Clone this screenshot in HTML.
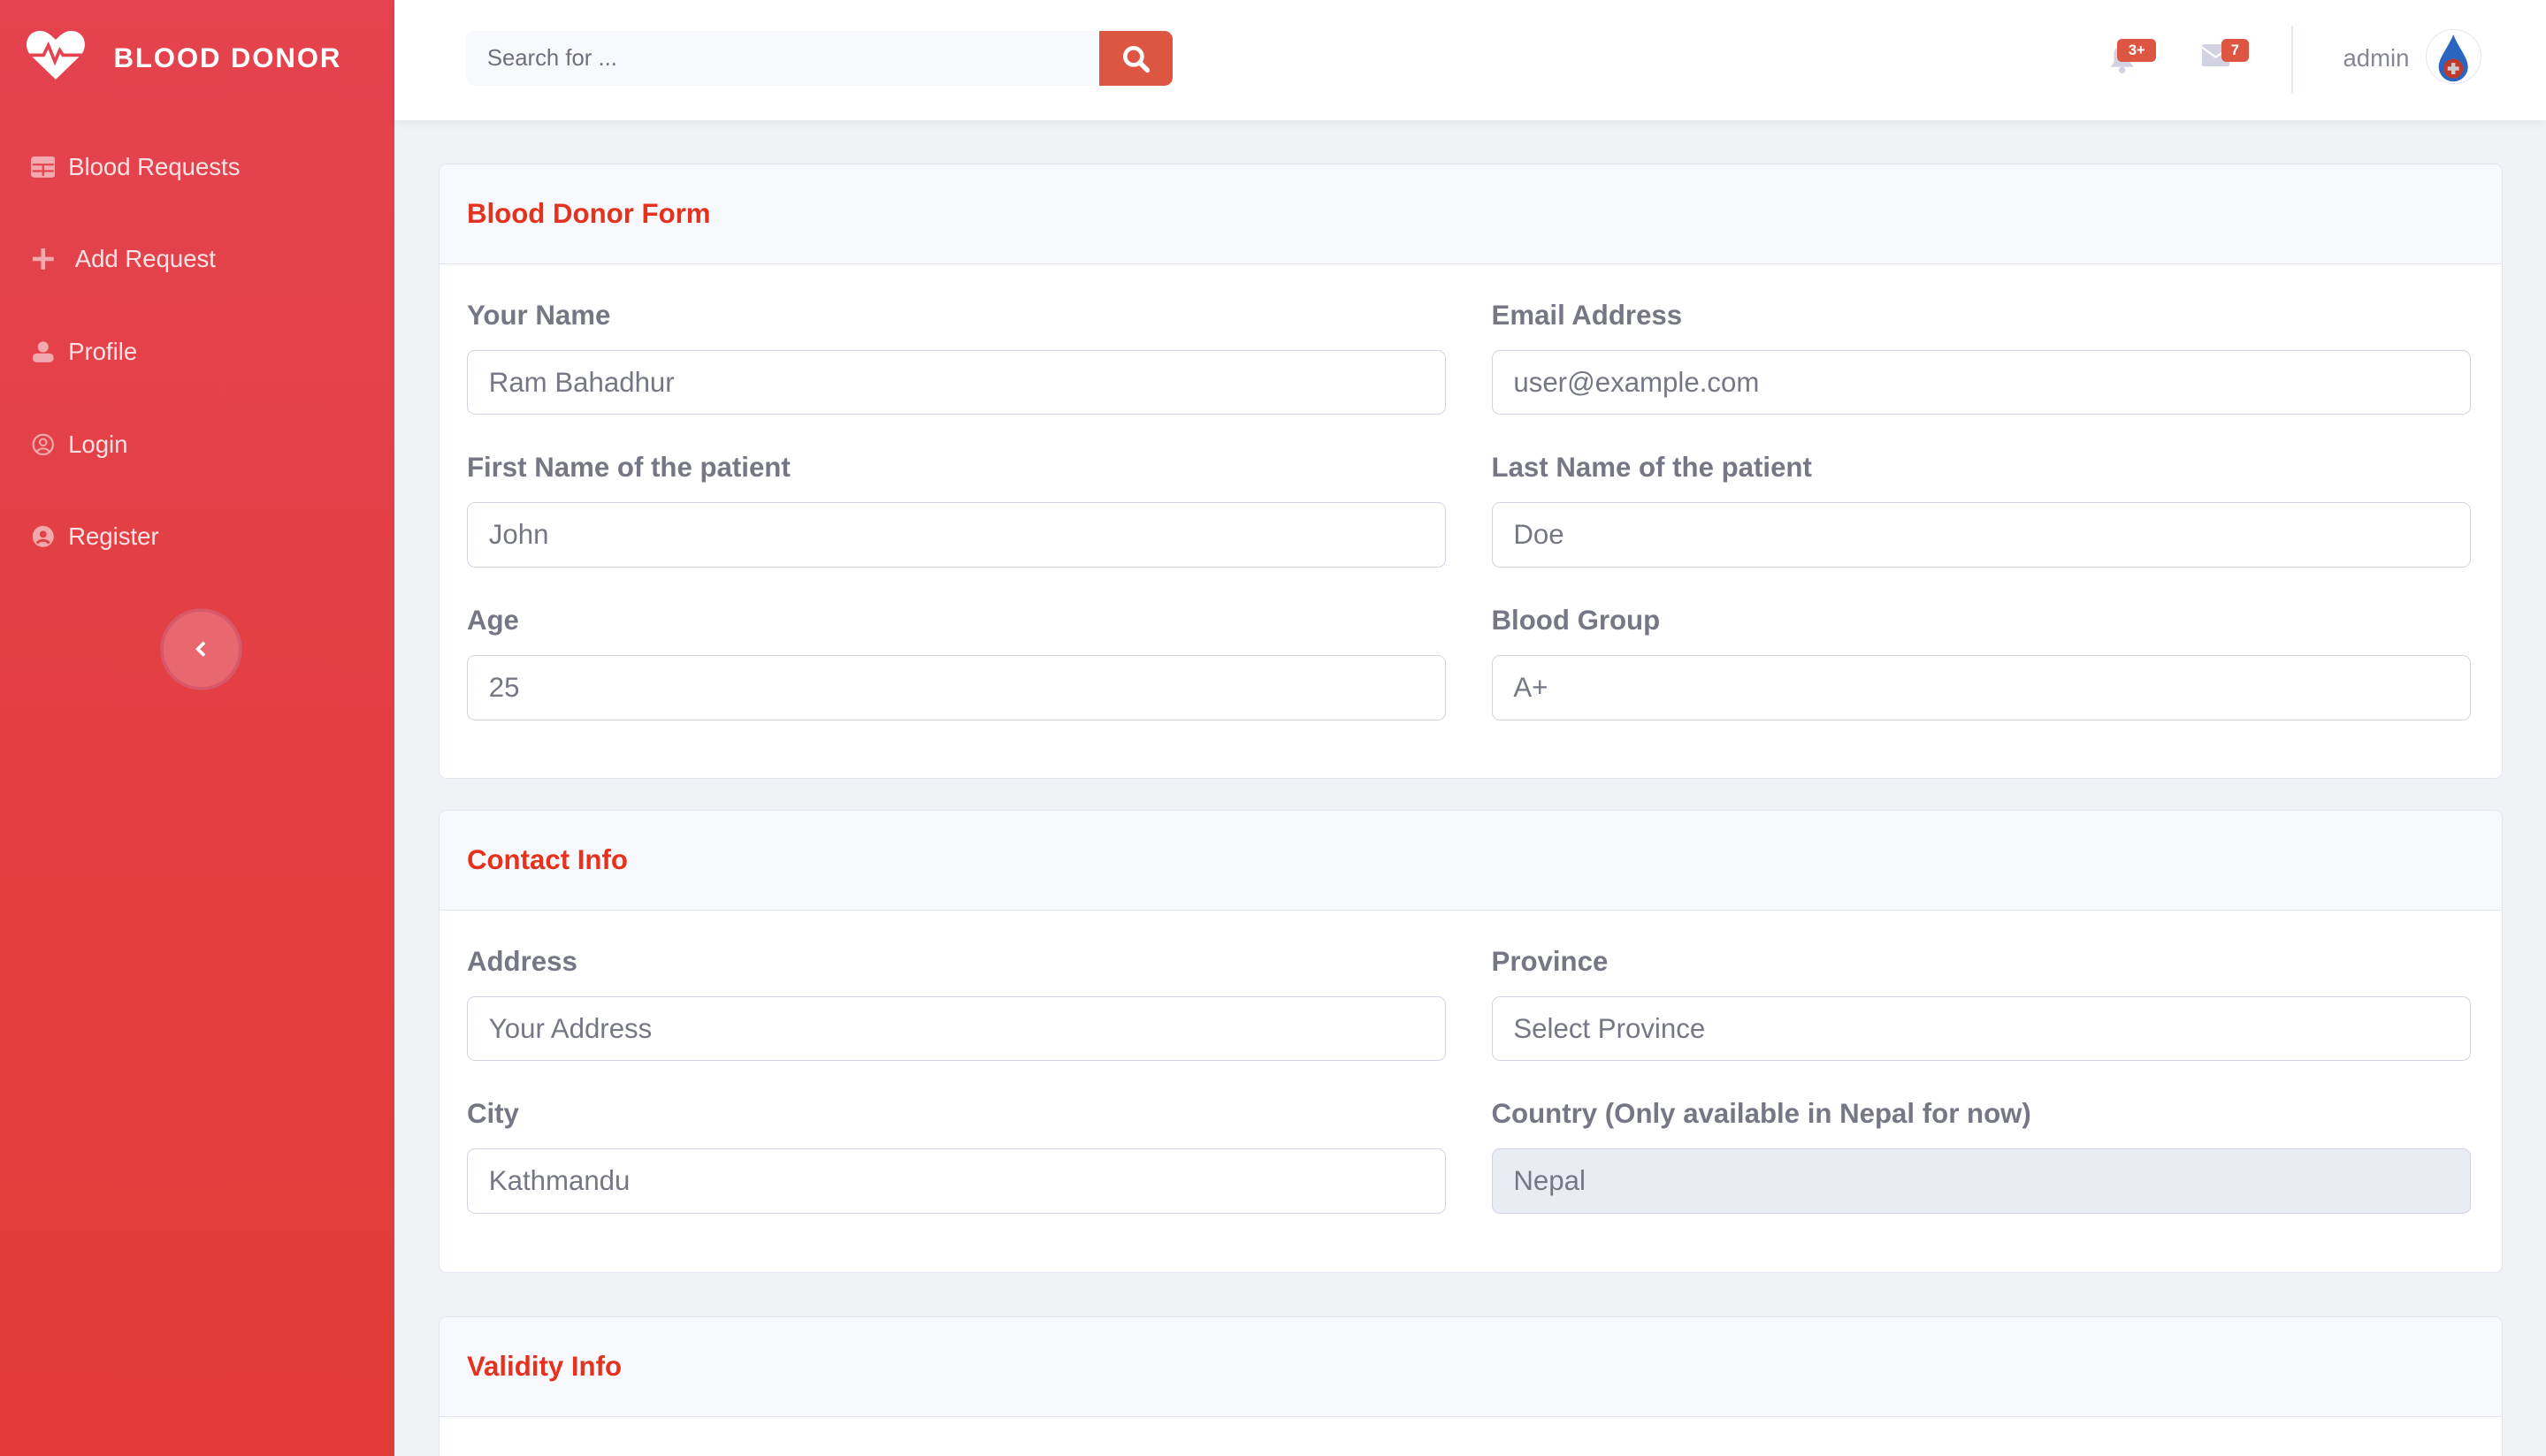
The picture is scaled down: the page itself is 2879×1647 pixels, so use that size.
<!DOCTYPE html>
<html><head><meta charset="utf-8"><style>
html{zoom:1.83610}
html,body{margin:0;overflow:hidden}
body{background:#f1f2f6;font-family:"Liberation Sans",sans-serif}
#w{position:relative;width:1568px;height:897px;overflow:hidden;background:#f1f2f6}
.sb{position:absolute;left:0;top:0;width:243px;height:897px;background:linear-gradient(#e4434f,#e23b37)}
.brand{position:absolute;left:70px;top:26px;color:#fff;font-weight:bold;font-size:17px;letter-spacing:1px}
.nav{position:absolute;left:19px;color:#fbe3e5;font-size:15px;display:flex;align-items:center;gap:8px}
.nav .ic{width:15px;height:13px;opacity:.55}
.tog{position:absolute;left:101px;top:377px;width:46px;height:46px;border-radius:50%;background:#e9686f;box-shadow:0 0 0 2px #d8586a}
.top{position:absolute;left:243px;top:0;right:0;height:74px;background:#fff;box-shadow:0 2px 6px rgba(0,0,0,.05)}
.search{position:absolute;left:287px;top:19px;width:390px;height:34px;background:#f8f9fc;border-radius:5px 0 0 5px;color:#6e707e;font-size:14px;line-height:34px;text-indent:13px}
.sbtn{position:absolute;left:677px;top:19px;width:45px;height:34px;background:#dc5641;border-radius:0 5px 5px 0}
.card{position:absolute;left:270px;width:1270px;background:#fff;border:1px solid #e3e6f0;border-radius:5px;overflow:hidden}
.ch{height:61px;background:#f8f9fc;border-bottom:1px solid #e3e6f0;color:#e5321f;font-weight:bold;font-size:17px;line-height:61px;padding-left:17px}
.lb{position:absolute;color:#757784;font-weight:bold;font-size:17px}
.in{position:absolute;width:602px;height:39px;border:1px solid #d1d3e2;border-radius:5px;color:#757784;font-size:17px;line-height:39px;text-indent:13px;background:#fff}
.badge{position:absolute;background:#dc5641;color:#fff;font-size:9px;font-weight:bold;border-radius:3px;text-align:center;height:14px;line-height:14px}
</style></head><body><div id="w">
<div class="sb">
<svg style="position:absolute;left:16px;top:18px" width="37" height="32" viewBox="0 0 37 32"><path d="M18.5 31L3 16C-2 10 1 1 9 1c4 0 7 3 9.5 5.5C21 4 24 1 28 1c8 0 11 9 6 15z" fill="#fff"/><path d="M1 16h10l3-6 4 10 3-7 2 3h14" stroke="#e4434f" stroke-width="2" fill="none"/></svg>
<div class="brand">BLOOD DONOR</div>
<div class="nav" style="top:94px"><svg class="ic" viewBox="0 0 15 13"><rect width="15" height="13" rx="2" fill="#fff"/><path d="M1 5h13M1 9h13M7.5 5v7" stroke="#e4434f" stroke-width="1.2"/></svg>Blood Requests</div>
<div class="nav" style="top:151px"><svg class="ic" viewBox="0 0 15 13"><path d="M7.5 0v13M1 6.5h13" stroke="#fff" stroke-width="2.5"/></svg>&nbsp;Add Request</div>
<div class="nav" style="top:208px"><svg class="ic" viewBox="0 0 15 13"><circle cx="7.5" cy="3.5" r="3.3" fill="#fff"/><rect x="1" y="7.5" width="13" height="5.5" rx="2.5" fill="#fff"/></svg>Profile</div>
<div class="nav" style="top:265px"><svg class="ic" viewBox="0 0 15 15" style="height:14px"><circle cx="7.5" cy="7.5" r="6.5" stroke="#fff" stroke-width="1.3" fill="none"/><circle cx="7.5" cy="6" r="2.2" stroke="#fff" stroke-width="1.2" fill="none"/><path d="M3.5 12c2-2.5 6-2.5 8 0" stroke="#fff" stroke-width="1.2" fill="none"/></svg>Login</div>
<div class="nav" style="top:322px"><svg class="ic" viewBox="0 0 15 15" style="height:14px"><circle cx="7.5" cy="7.5" r="7" fill="#fff"/><circle cx="7.5" cy="6" r="2.3" fill="#e4434f"/><path d="M3.5 12c2-2.5 6-2.5 8 0" stroke="#e4434f" stroke-width="1.8" fill="none"/></svg>Register</div>
<div class="tog"><svg style="position:absolute;left:19px;top:18px" width="8" height="10" viewBox="0 0 8 10"><path d="M6 1L2 5l4 4" stroke="#fff" stroke-width="2" fill="none"/></svg></div>
</div>
<div class="top"></div>
<div class="search">Search for ...</div>
<div class="sbtn"><svg style="position:absolute;left:14px;top:9px" width="17" height="17" viewBox="0 0 17 17"><circle cx="7" cy="7" r="5.2" stroke="#fff" stroke-width="2.5" fill="none"/><path d="M11 11l4.5 4.5" stroke="#fff" stroke-width="3" stroke-linecap="round"/></svg></div>
<svg style="position:absolute;left:1299px;top:27px" width="16" height="18" viewBox="0 0 16 18"><path d="M8 1c-3 0-5 2-5 5v5l-2 3h14l-2-3V6c0-3-2-5-5-5z" fill="#d1d3e2"/><circle cx="8" cy="16" r="2" fill="#d1d3e2"/></svg>
<div class="badge" style="left:1304px;top:24px;width:24px">3+</div>
<svg style="position:absolute;left:1356px;top:27px" width="17" height="14" viewBox="0 0 17 14"><rect width="17" height="14" rx="1.5" fill="#d1d3e2"/><path d="M0 2l8.5 6L17 2" stroke="#fff" stroke-width="1.2" fill="none"/></svg>
<div class="badge" style="left:1368px;top:24px;width:17px">7</div>
<div style="position:absolute;left:1411px;top:16px;width:1px;height:41px;background:#e3e6f0"></div>
<div style="position:absolute;left:1443px;top:27px;color:#858796;font-size:15px">admin</div>
<div style="position:absolute;left:1494px;top:18px;width:34px;height:34px;border-radius:50%;border:1px solid #e3e6f0;box-sizing:border-box"></div>
<svg style="position:absolute;left:1500px;top:21px" width="22" height="30" viewBox="0 0 22 30"><path d="M11 0C8 8 2 14 2 20a9 9 0 0018 0C20 14 14 8 11 0z" fill="#2a65c0"/><circle cx="11" cy="21" r="6" fill="#c0392b"/><path d="M11 17.5v7M7.5 21h7" stroke="#ccc" stroke-width="2.4"/></svg>

<div class="card" style="top:101px;height:378px"><div class="ch">Blood Donor Form</div>
<div class="lb" style="left:17px;top:83px">Your Name</div><div class="lb" style="left:648px;top:83px">Email Address</div>
<div class="in" style="left:17px;top:114px">Ram Bahadhur</div><div class="in" style="left:648px;top:114px">user@example.com</div>
<div class="lb" style="left:17px;top:177px">First Name of the patient</div><div class="lb" style="left:648px;top:177px">Last Name of the patient</div>
<div class="in" style="left:17px;top:208px">John</div><div class="in" style="left:648px;top:208px">Doe</div>
<div class="lb" style="left:17px;top:271px">Age</div><div class="lb" style="left:648px;top:271px">Blood Group</div>
<div class="in" style="left:17px;top:302px">25</div><div class="in" style="left:648px;top:302px">A+</div>
</div>
<div class="card" style="top:499px;height:284px"><div class="ch">Contact Info</div>
<div class="lb" style="left:17px;top:83px">Address</div><div class="lb" style="left:648px;top:83px">Province</div>
<div class="in" style="left:17px;top:114px">Your Address</div><div class="in" style="left:648px;top:114px">Select Province</div>
<div class="lb" style="left:17px;top:177px">City</div><div class="lb" style="left:648px;top:177px">Country (Only available in Nepal for now)</div>
<div class="in" style="left:17px;top:208px">Kathmandu</div><div class="in" style="left:648px;top:208px;background:#eaecf4">Nepal</div>
</div>
<div class="card" style="top:811px;height:120px"><div class="ch">Validity Info</div></div>
</div></body></html>
